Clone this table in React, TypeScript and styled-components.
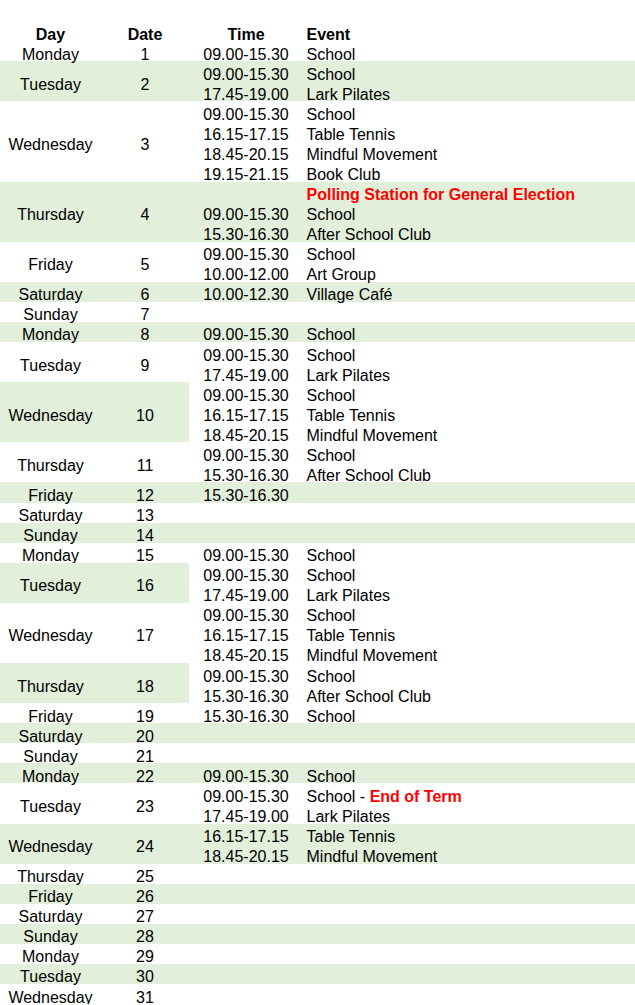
import React from 'react'
import styled, { createGlobalStyle } from 'styled-components'

type Shade = 'none' | 'full' | 'left'
type Slot = { time?: string; event?: string; alert?: string }
type Day = { day: string; date: number; shade: Shade; slots: Slot[] }

const GREEN = '#e2efda'
const ROW = '20.0625px'
const COLUMNS = '101px 88px 114px 1fr'

const GlobalStyle = createGlobalStyle`
  body {
    margin: 0;
    background: #fff;
    color: #000;
    font-family: 'Liberation Sans', Arial, sans-serif;
    font-size: 16px;
  }
`

const Sheet = styled.div`
  padding-top: 21px;
  width: 635px;
`

const HeaderRow = styled.div`
  display: grid;
  grid-template-columns: ${COLUMNS};
  grid-template-rows: ${ROW};
  font-weight: bold;
`

const Block = styled.div<{ $rows: number; $shade: Shade }>`
  display: grid;
  grid-template-columns: ${COLUMNS};
  grid-template-rows: repeat(${(p) => p.$rows}, ${ROW});
  background: ${(p) => (p.$shade === 'full' ? GREEN : 'transparent')};
`

const Cell = styled.div<{ $align?: 'center' | 'left' }>`
  box-sizing: border-box;
  min-height: 0;
  display: flex;
  align-items: center;
  justify-content: ${(p) => (p.$align === 'left' ? 'flex-start' : 'center')};
  padding-top: 6px;
  padding-left: ${(p) => (p.$align === 'left' ? '3.5px' : '0')};
  line-height: 13px;
  white-space: pre;
`

const Merged = styled(Cell)<{ $tinted: boolean }>`
  grid-row: 1 / -1;
  background: ${(p) => (p.$tinted ? GREEN : 'transparent')};
`

const SlotRow = styled.div`
  grid-column: 3 / span 2;
  display: grid;
  grid-template-columns: 114px 1fr;
  grid-template-rows: ${ROW};
`

const Alert = styled.span`
  color: #ff0000;
  font-weight: bold;
`

const days: Day[] = [
  { day: 'Monday', date: 1, shade: 'none', slots: [{ time: '09.00-15.30', event: 'School' }] },
  {
    day: 'Tuesday', date: 2, shade: 'full',
    slots: [{ time: '09.00-15.30', event: 'School' }, { time: '17.45-19.00', event: 'Lark Pilates' }],
  },
  {
    day: 'Wednesday', date: 3, shade: 'none',
    slots: [
      { time: '09.00-15.30', event: 'School' },
      { time: '16.15-17.15', event: 'Table Tennis' },
      { time: '18.45-20.15', event: 'Mindful Movement' },
      { time: '19.15-21.15', event: 'Book Club' },
    ],
  },
  {
    day: 'Thursday', date: 4, shade: 'full',
    slots: [
      { alert: 'Polling Station for General Election' },
      { time: '09.00-15.30', event: 'School' },
      { time: '15.30-16.30', event: 'After School Club' },
    ],
  },
  {
    day: 'Friday', date: 5, shade: 'none',
    slots: [{ time: '09.00-15.30', event: 'School' }, { time: '10.00-12.00', event: 'Art Group' }],
  },
  { day: 'Saturday', date: 6, shade: 'full', slots: [{ time: '10.00-12.30', event: 'Village Café' }] },
  { day: 'Sunday', date: 7, shade: 'none', slots: [] },
  { day: 'Monday', date: 8, shade: 'full', slots: [{ time: '09.00-15.30', event: 'School' }] },
  {
    day: 'Tuesday', date: 9, shade: 'none',
    slots: [{ time: '09.00-15.30', event: 'School' }, { time: '17.45-19.00', event: 'Lark Pilates' }],
  },
  {
    day: 'Wednesday', date: 10, shade: 'left',
    slots: [
      { time: '09.00-15.30', event: 'School' },
      { time: '16.15-17.15', event: 'Table Tennis' },
      { time: '18.45-20.15', event: 'Mindful Movement' },
    ],
  },
  {
    day: 'Thursday', date: 11, shade: 'none',
    slots: [{ time: '09.00-15.30', event: 'School' }, { time: '15.30-16.30', event: 'After School Club' }],
  },
  { day: 'Friday', date: 12, shade: 'full', slots: [{ time: '15.30-16.30' }] },
  { day: 'Saturday', date: 13, shade: 'none', slots: [] },
  { day: 'Sunday', date: 14, shade: 'full', slots: [] },
  { day: 'Monday', date: 15, shade: 'none', slots: [{ time: '09.00-15.30', event: 'School' }] },
  {
    day: 'Tuesday', date: 16, shade: 'left',
    slots: [{ time: '09.00-15.30', event: 'School' }, { time: '17.45-19.00', event: 'Lark Pilates' }],
  },
  {
    day: 'Wednesday', date: 17, shade: 'none',
    slots: [
      { time: '09.00-15.30', event: 'School' },
      { time: '16.15-17.15', event: 'Table Tennis' },
      { time: '18.45-20.15', event: 'Mindful Movement' },
    ],
  },
  {
    day: 'Thursday', date: 18, shade: 'left',
    slots: [{ time: '09.00-15.30', event: 'School' }, { time: '15.30-16.30', event: 'After School Club' }],
  },
  { day: 'Friday', date: 19, shade: 'none', slots: [{ time: '15.30-16.30', event: 'School' }] },
  { day: 'Saturday', date: 20, shade: 'full', slots: [] },
  { day: 'Sunday', date: 21, shade: 'none', slots: [] },
  { day: 'Monday', date: 22, shade: 'full', slots: [{ time: '09.00-15.30', event: 'School' }] },
  {
    day: 'Tuesday', date: 23, shade: 'none',
    slots: [
      { time: '09.00-15.30', event: 'School - ', alert: 'End of Term' },
      { time: '17.45-19.00', event: 'Lark Pilates' },
    ],
  },
  {
    day: 'Wednesday', date: 24, shade: 'full',
    slots: [{ time: '16.15-17.15', event: 'Table Tennis' }, { time: '18.45-20.15', event: 'Mindful Movement' }],
  },
  { day: 'Thursday', date: 25, shade: 'none', slots: [] },
  { day: 'Friday', date: 26, shade: 'full', slots: [] },
  { day: 'Saturday', date: 27, shade: 'none', slots: [] },
  { day: 'Sunday', date: 28, shade: 'full', slots: [] },
  { day: 'Monday', date: 29, shade: 'none', slots: [] },
  { day: 'Tuesday', date: 30, shade: 'full', slots: [] },
  { day: 'Wednesday', date: 31, shade: 'none', slots: [] },
]

const DayBlock = ({ day, date, shade, slots }: Day) => {
  const rows = slots.length ? slots : [{}]
  return (
    <Block $rows={rows.length} $shade={shade}>
      <Merged $tinted={shade === 'left'}>{day}</Merged>
      <Merged $tinted={shade === 'left'}>{date}</Merged>
      {rows.map((slot: Slot, i) => (
        <SlotRow key={i}>
          <Cell>{slot.time}</Cell>
          <Cell $align="left">
            {slot.event}
            {slot.alert && <Alert>{slot.alert}</Alert>}
          </Cell>
        </SlotRow>
      ))}
    </Block>
  )
}

export default function App() {
  return (
    <Sheet>
      <GlobalStyle />
      <HeaderRow>
        <Cell>Day</Cell>
        <Cell>Date</Cell>
        <Cell>Time</Cell>
        <Cell $align="left">Event</Cell>
      </HeaderRow>
      {days.map((d) => (
        <DayBlock key={d.date} {...d} />
      ))}
    </Sheet>
  )
}
